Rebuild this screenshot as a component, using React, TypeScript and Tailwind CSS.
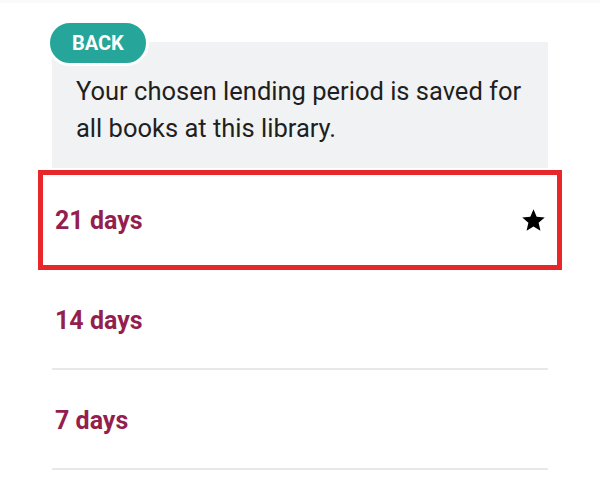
const periods = [
  { label: "21 days", selected: true },
  { label: "14 days", selected: false },
  { label: "7 days", selected: false },
];

function StarIcon() {
  return (
    <svg width="27" height="27" viewBox="0 0 24 24" className="fill-black">
      <path d="M12 17.27L18.18 21l-1.64-7.03L22 9.24l-7.19-.61L12 2 9.19 8.63 2 9.24l5.46 4.73L5.82 21z" />
    </svg>
  );
}

export default function App() {
  return (
    <div className="min-h-[497px] w-[600px] bg-white font-['Roboto',sans-serif]">
      <div className="h-[3px] bg-[#fafafa]" />
      <div className="mx-[52px] pt-[39px]">
        <div className="relative bg-[#f1f2f4] px-6 pt-[31px] pb-[21px]">
          <button className="absolute -left-[5px] -top-[22px] h-[46px] rounded-full border-[3px] border-white bg-[#26a69a] px-[22px] text-[20px] font-bold leading-none text-white">
            BACK
          </button>
          <p className="text-[25.5px] leading-[37px] text-[#1f1f1f]">
            Your chosen lending period is saved for all books at this library.
          </p>
        </div>
        <div className="flex flex-col pt-[2px]">
          {periods.map((p) => (
            <div
              key={p.label}
              className="relative flex h-[100px] items-center justify-between border-b-2 border-[#e8e8e8] pt-[3px] pl-[3px] pr-[1px]"
            >
              <span className="text-[25px] font-bold text-[#941f4e]">
                {p.label}
              </span>
              {p.selected && <StarIcon />}
              {p.selected && (
                <div className="absolute -left-[14px] -right-[14px] top-0 -bottom-[2px] border-[5px] border-[#e8272b]" />
              )}
            </div>
          ))}
        </div>
      </div>
    </div>
  );
}
